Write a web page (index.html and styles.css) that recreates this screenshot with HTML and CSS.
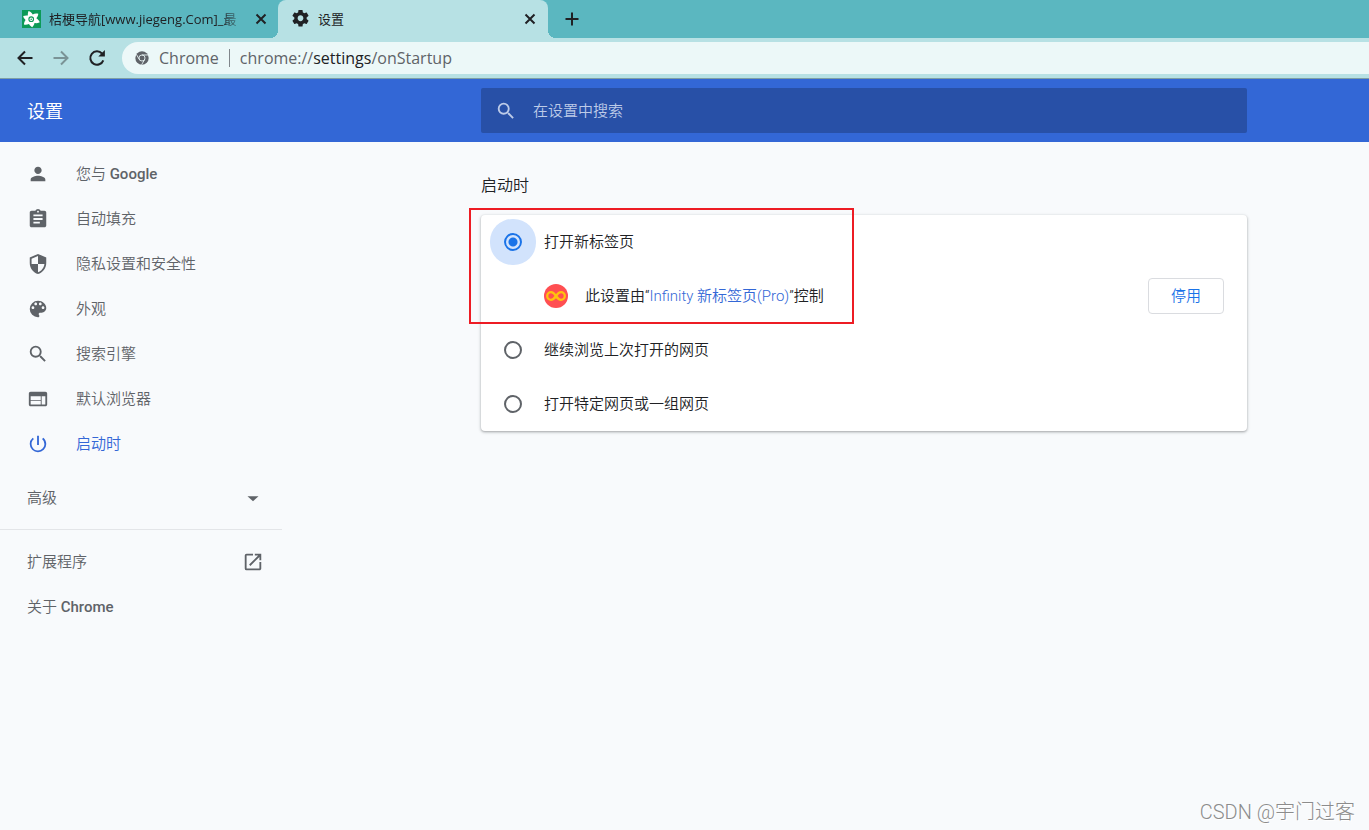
FILE: index.html
```
<!DOCTYPE html>
<html lang="zh-CN">
<head>
<meta charset="utf-8">
<meta name="viewport" content="width=device-width, initial-scale=1">
<title>设置</title>
<link rel="stylesheet" href="styles.css">
</head>
<body>
<div class="browser">
  <div class="tab-strip">
    <div class="tab">
      <svg class="tab-icon" viewBox="0 0 19 18" aria-hidden="true">
        <path fill="#0c9a57" d="M0 0h19v18H0z"/>
        <path fill="#fff" d="M6.500 1c1.800.6 3.200 1.700 4.200 3.400 1.800-.9 3.600-1.100 5.600-.6-.2 1.800-.8 3.300-2 4.500 1.600 1 2.700 2.300 3.500 4-1.800.8-3.500 1-5.300.7-.3 1.700-1.100 3-2.300 4.200-1.400-.8-2.500-1.800-3.200-3.200-1.700.8-3.300 1-5.100.6.1-1.800.6-3.300 1.700-4.700C2.400 9 1.500 7.800 1.200 6.100c1.500-.6 3-.8 4.600-.5C5.700 3.900 5.900 2.400 6.500 1z"/>
        <circle cx="9.200" cy="9.200" r="2.300" fill="none" stroke="#0c9a57" stroke-width="1.100"/>
        <circle cx="9.200" cy="9.200" r=".8" fill="#0c9a57"/>
      </svg>
      <span class="tab-title tab-title-fade">桔梗导航[www.jiegeng.Com]_最</span>
      <button class="tab-close" type="button" aria-label="关闭标签页">
        <svg viewBox="0 0 14 14"><path d="M2.500 2.500l9 9m0-9l-9 9"/></svg>
      </button>
    </div>
    <div class="tab tab-active">
      <svg class="tab-icon" viewBox="0 0 24 24" aria-hidden="true">
        <path fill="#202124" transform="translate(-1.200 -2.200) scale(1.100)" d="M19.430 12.980c.04-.32.07-.64.07-.98s-.03-.66-.07-.98l2.110-1.650c.19-.15.24-.42.12-.64l-2-3.460c-.12-.22-.39-.3-.61-.22l-2.490 1c-.52-.4-1.080-.73-1.690-.98l-.38-2.650C14.460 2.180 14.250 2 14 2h-4c-.25 0-.46.18-.49.42l-.38 2.650c-.61.25-1.170.59-1.690.98l-2.490-1c-.23-.09-.49 0-.61.22l-2 3.460c-.13.22-.07.49.12.64l2.110 1.650c-.04.32-.07.65-.07.98s.03.66.07.98l-2.110 1.650c-.19.15-.24.42-.12.64l2 3.460c.12.22.39.3.61.22l2.490-1c.52.4 1.080.73 1.690.98l.38 2.650c.03.24.24.42.49.42h4c.25 0 .46-.18.49-.42l.38-2.650c.61-.25 1.170-.59 1.690-.98l2.490 1c.23.09.49 0 .61-.22l2-3.460c.12-.22.07-.49-.12-.64l-2.110-1.650zM12 15.500c-1.930 0-3.500-1.570-3.500-3.500s1.570-3.500 3.500-3.500 3.500 1.570 3.500 3.500-1.570 3.500-3.500 3.500z"/>
      </svg>
      <span class="tab-title">设置</span>
      <button class="tab-close" type="button" aria-label="关闭标签页">
        <svg viewBox="0 0 14 14"><path d="M2.500 2.500l9 9m0-9l-9 9"/></svg>
      </button>
    </div>
    <button class="new-tab" type="button" aria-label="新标签页">
      <svg viewBox="0 0 14 14"><path d="M7 .5v13M.5 7h13"/></svg>
    </button>
  </div>
  <div class="toolbar">
    <div class="tools">
      <button class="tool" type="button" aria-label="后退">
        <svg viewBox="0 0 18 18"><path d="M16.500 9H2.500M9 2.500 2.500 9 9 15.500"/></svg>
      </button>
      <button class="tool tool-off" type="button" aria-label="前进">
        <svg viewBox="0 0 18 18"><path d="M1.500 9h14M9 2.500 15.500 9 9 15.500"/></svg>
      </button>
      <button class="tool" type="button" aria-label="重新加载">
        <svg viewBox="0 0 18 18"><path d="M15.300 11.300A6.700 6.700 0 1 1 14 4.500"/><path class="solid" d="M16.900 1v6.600h-6.600z"/></svg>
      </button>
    </div>
    <div class="address">
      <svg class="site-icon" viewBox="0 0 24 24" aria-hidden="true">
        <circle cx="12" cy="12" r="11.500" fill="#5f6368"/>
        <g fill="none" stroke="#ecf8f8" stroke-width="1.500">
          <circle cx="12" cy="12" r="5.200"/>
          <path d="M12 6.800h10.500M7.500 14.600 2.200 5.600M16.500 14.600l-5.200 9"/>
        </g>
      </svg>
      <span class="site-name">Chrome</span>
      <span class="site-rule"></span>
      <div class="url" role="textbox" aria-label="地址" contenteditable="true" spellcheck="false">chrome://<span class="url-host">settings</span>/onStartup</div>
    </div>
  </div>
</div>

<header class="header columns">
  <h1 class="brand">设置</h1>
  <label class="search">
    <svg viewBox="0 0 24 24" aria-hidden="true"><path d="M15.500 14h-.79l-.28-.27A6.471 6.471 0 0 0 16 9.500 6.500 6.500 0 1 0 9.500 16c1.610 0 3.090-.59 4.230-1.570l.27.28v.79l5 4.990L20.490 19l-4.990-5zm-6 0C7.010 14 5 11.990 5 9.500S7.010 5 9.500 5 14 7.010 14 9.500 11.990 14 9.500 14z"/></svg>
    <input type="search" placeholder="在设置中搜索" aria-label="在设置中搜索">
  </label>
</header>

<div class="columns">
  <nav class="sidebar">
    <div class="nav-group">
      <a class="nav-item" href="#people"><svg viewBox="0 0 24 24"><path d="M12 12c2.210 0 4-1.790 4-4s-1.790-4-4-4-4 1.790-4 4 1.790 4 4 4zm0 2c-2.670 0-8 1.340-8 4v2h16v-2c0-2.660-5.330-4-8-4z"/></svg><span>您与 <b>Google</b></span></a>
      <a class="nav-item" href="#autofill"><svg viewBox="0 0 24 24"><path d="M19 3h-4.180C14.400 1.840 13.300 1 12 1c-1.300 0-2.400.84-2.820 2H5c-1.100 0-2 .9-2 2v14c0 1.100.9 2 2 2h14c1.100 0 2-.9 2-2V5c0-1.100-.9-2-2-2zm-7 0c.55 0 1 .45 1 1s-.45 1-1 1-1-.45-1-1 .45-1 1-1zm2 14H7v-2h7v2zm3-4H7v-2h10v2zm0-4H7V7h10v2z"/></svg><span>自动填充</span></a>
      <a class="nav-item" href="#privacy"><svg viewBox="0 0 24 24"><path d="M12 1 3 5v6c0 5.550 3.840 10.740 9 12 5.160-1.260 9-6.450 9-12V5l-9-4zm0 10.990h7c-.53 4.120-3.280 7.790-7 8.940V12H5V6.300l7-3.110v8.800z"/></svg><span>隐私设置和安全性</span></a>
      <a class="nav-item" href="#appearance"><svg viewBox="0 0 24 24"><path d="M12 3a9 9 0 0 0 0 18c.83 0 1.500-.67 1.500-1.500 0-.39-.15-.74-.39-1.010-.23-.26-.38-.61-.38-.99 0-.83.67-1.500 1.500-1.500H16c2.760 0 5-2.240 5-5 0-4.420-4.030-8-9-8zm-5.500 9c-.83 0-1.500-.67-1.500-1.500S5.670 9 6.500 9 8 9.670 8 10.500 7.330 12 6.500 12zm3-4C8.670 8 8 7.330 8 6.500S8.670 5 9.500 5s1.500.67 1.500 1.500S10.330 8 9.500 8zm5 0c-.83 0-1.500-.67-1.500-1.500S13.670 5 14.500 5s1.500.67 1.500 1.500S15.330 8 14.500 8zm3 4c-.83 0-1.500-.67-1.500-1.500S16.670 9 17.500 9s1.500.67 1.500 1.500-.67 1.500-1.500 1.500z"/></svg><span>外观</span></a>
      <a class="nav-item" href="#search"><svg viewBox="0 0 24 24"><path d="M15.500 14h-.79l-.28-.27A6.471 6.471 0 0 0 16 9.500 6.500 6.500 0 1 0 9.500 16c1.610 0 3.090-.59 4.230-1.570l.27.28v.79l5 4.990L20.490 19l-4.990-5zm-6 0C7.010 14 5 11.990 5 9.500S7.010 5 9.500 5 14 7.010 14 9.500 11.990 14 9.500 14z"/></svg><span>搜索引擎</span></a>
      <a class="nav-item" href="#default-browser"><svg viewBox="0 0 24 24"><path d="M20 4H4c-1.100 0-1.990.9-1.990 2L2 18c0 1.100.9 2 2 2h16c1.100 0 2-.9 2-2V6c0-1.100-.9-2-2-2zm-5 14H4v-4h11v4zm0-5H4V9h11v4zm5 5h-4V9h4v9z"/></svg><span>默认浏览器</span></a>
      <a class="nav-item nav-current" href="#startup" aria-current="page"><svg viewBox="0 0 24 24"><path d="M13 3h-2v10h2V3zm4.830 2.170-1.420 1.420A6.920 6.920 0 0 1 19 12c0 3.870-3.130 7-7 7A6.995 6.995 0 0 1 7.580 6.580L6.170 5.170A8.932 8.932 0 0 0 3 12a9 9 0 0 0 18 0c0-2.740-1.230-5.180-3.170-6.830z"/></svg><span>启动时</span></a>
    </div>
    <button class="nav-line" type="button" aria-expanded="false">高级<svg viewBox="0 0 24 24"><path d="m6 10 6 5.500 6-5.500z"/></svg></button>
    <div class="nav-group nav-more">
      <a class="nav-line" href="#extensions">扩展程序<svg viewBox="0 0 24 24"><path d="M19 19H5V5h7V3H5a2 2 0 0 0-2 2v14a2 2 0 0 0 2 2h14c1.100 0 2-.9 2-2v-7h-2v7zM14 3v2h3.590l-9.830 9.830 1.410 1.410L19 6.410V10h2V3h-7z"/></svg></a>
      <a class="nav-line" href="#about"><span>关于 <b>Chrome</b></span></a>
    </div>
  </nav>
  <main class="main">
    <h2 class="section-title">启动时</h2>
    <section class="card">
      <label class="option"><input type="radio" name="startup" checked><span>打开新标签页</span></label>
      <div class="controlled">
        <svg class="infinity" viewBox="0 0 24 24" aria-hidden="true">
          <circle cx="12" cy="12" r="12" fill="#ff4f52"/>
          <path fill="none" stroke="#ffc20e" stroke-width="2.300" d="M12 12c-1.700-2.500-3-3.800-5-3.800a3.800 3.800 0 0 0 0 7.600c2 0 3.300-1.300 5-3.800s3-3.800 5-3.800a3.800 3.800 0 0 1 0 7.600c-2 0-3.300-1.300-5-3.800z"/>
        </svg>
        <span class="controlled-text">此设置由“<a href="#infinity">Infinity 新标签页(Pro)</a>”控制</span>
        <button class="disable" type="button">停用</button>
      </div>
      <label class="option"><input type="radio" name="startup"><span>继续浏览上次打开的网页</span></label>
      <label class="option"><input type="radio" name="startup"><span>打开特定网页或一组网页</span></label>
      <div class="highlight"></div>
    </section>
  </main>
</div>
<div class="watermark">CSDN @宇门过客</div>
</body>
</html>
```

FILE: styles.css
```
* { box-sizing: border-box; }

body {
  position: relative;
  min-height: 100vh;
  margin: 0;
  background: #f8fafc;
  color: #202124;
  font: 350 15px/22px Roboto, "Noto Sans CJK SC", sans-serif;
}

button, input { font: inherit; }

button {
  padding: 0;
  border: 0;
  background: none;
  color: inherit;
}

a { color: inherit; text-decoration: none; }
b { font-weight: 500; }
svg { display: block; flex: none; }

/* Browser frame */
.browser {
  border-bottom: 1px solid #7f9fa5;
  background: #b7e1e4;
  font-family: "Open Sans", "Noto Sans CJK SC", sans-serif;
  font-weight: 400;
}

.tab-strip {
  display: flex;
  height: 38px;
  background: #5bb7c0;
}

.tab {
  position: relative;
  display: flex;
  flex: 0 1 278px;
  align-items: center;
  gap: 8px;
  min-width: 0;
  padding: 0 10px 0 22px;
  font-size: 13px;
}

.tab-active {
  flex-basis: 270px;
  padding: 0 11px 0 13px;
  border-radius: 8px 8px 0 0;
  background: #b7e1e4;
}

.tab-active::before,
.tab-active::after {
  content: "";
  position: absolute;
  bottom: 0;
  width: 8px;
  height: 8px;
}

.tab-active::before {
  right: 100%;
  background: radial-gradient(circle at 0 0, transparent 8px, #b7e1e4 8px);
}

.tab-active::after {
  left: 100%;
  background: radial-gradient(circle at 100% 0, transparent 8px, #b7e1e4 8px);
}

.tab-icon { width: 19px; height: 18px; }

.tab-title {
  flex: 1;
  overflow: hidden;
  white-space: nowrap;
}

.tab-title-fade {
  mask-image: linear-gradient(to left, transparent, #000 24px);
}

.tab-close svg { width: 14px; height: 14px; }

.tab-close path,
.new-tab path {
  fill: none;
  stroke: #202124;
  stroke-width: 2;
}

.new-tab { padding: 0 17px; }
.new-tab svg { width: 14px; height: 14px; }

.toolbar {
  display: flex;
  align-items: center;
  gap: 16px;
  height: 40px;
  padding-left: 16px;
}

.tools { display: flex; gap: 18px; }
.tool svg { width: 18px; height: 18px; }

.tool path {
  fill: none;
  stroke: #202124;
  stroke-width: 2;
}

.tool .solid { fill: #202124; stroke: none; }
.tool-off { opacity: .4; }

.address {
  display: flex;
  flex: 1;
  align-items: center;
  gap: 10px;
  height: 32px;
  padding-left: 13px;
  border-radius: 16px 0 0 16px;
  background: #ecf8f8;
  color: #5f6368;
  font-size: 16px;
}

.site-icon { width: 14px; height: 14px; }
.site-rule { width: 1px; height: 18px; background: #80868b; }
.url { flex: 1; outline: 0; white-space: nowrap; }
.url-host { color: #202124; }

/* Settings page */
.columns {
  display: grid;
  grid-template-columns: 282px minmax(24px, 199fr) minmax(0, 766px) minmax(24px, 122fr);
}

.header {
  align-items: center;
  height: 63px;
  background: #3367d6;
  color: #fff;
}

.brand {
  margin: 0;
  padding: 2px 0 0 27px;
  font-size: 18px;
  font-weight: 400;
}

.search {
  display: flex;
  grid-column: 3;
  align-items: center;
  gap: 16px;
  height: 45px;
  padding: 0 14px;
  border-radius: 2px;
  background: #2850a7;
}

.search svg { width: 22px; height: 22px; fill: #bdcbe8; }

.search input {
  flex: 1;
  min-width: 0;
  padding: 0;
  border: 0;
  outline: 0;
  background: none;
  color: #fff;
}

.search input::placeholder { color: #bdcbe8; opacity: 1; }

.sidebar {
  display: grid;
  gap: 9px;
  align-content: start;
  padding-top: 9px;
  color: #5f6368;
}

.sidebar svg { width: 22px; height: 22px; fill: currentColor; }

.nav-item,
.nav-line {
  display: flex;
  align-items: center;
  height: 45px;
  padding: 0 18px 0 27px;
}

.nav-item { gap: 27px; }
.nav-line { justify-content: space-between; }
.nav-current { color: #3367d6; }

.nav-more {
  padding-top: 9px;
  border-top: 1px solid #e3e5e8;
}

.main {
  grid-column: 3;
  padding-top: 33px;
}

.section-title {
  margin: 0 0 18px;
  font-size: 16px;
  font-weight: 350;
}

.card {
  position: relative;
  border-radius: 4px;
  background: #fff;
  box-shadow: 0 1px 2px rgba(60, 64, 67, .3), 0 1px 3px 1px rgba(60, 64, 67, .15);
}

.option,
.controlled {
  display: flex;
  align-items: center;
  height: 54px;
  padding: 0 23px;
}

.option { gap: 22px; }

.option input {
  appearance: none;
  width: 18px;
  height: 18px;
  margin: 0;
  border: 2px solid #5f6368;
  border-radius: 50%;
}

.option input:checked {
  border-color: #1a73e8;
  background: radial-gradient(circle, #1a73e8 4px, #d2e3fc 5px);
  box-shadow: 0 0 0 14px #d2e3fc;
}

.controlled {
  gap: 17px;
  padding-left: 63px;
}

.infinity { width: 24px; height: 24px; }
.controlled-text { flex: 1; }
.controlled-text a { color: #3367d6; }

.disable {
  height: 36px;
  padding: 0 22px;
  border: 1px solid #dadce0;
  border-radius: 4px;
  color: #1a73e8;
}

.highlight {
  position: absolute;
  top: -7px;
  left: -12px;
  width: 385px;
  height: 116px;
  border: 2px solid #ed1c24;
  pointer-events: none;
}

.watermark {
  position: absolute;
  right: 14px;
  bottom: 5px;
  color: #8c8c8c;
  font-size: 20px;
  font-weight: 300;
  line-height: 26px;
  text-shadow: 1px 1px 0 #fff;
}
```
